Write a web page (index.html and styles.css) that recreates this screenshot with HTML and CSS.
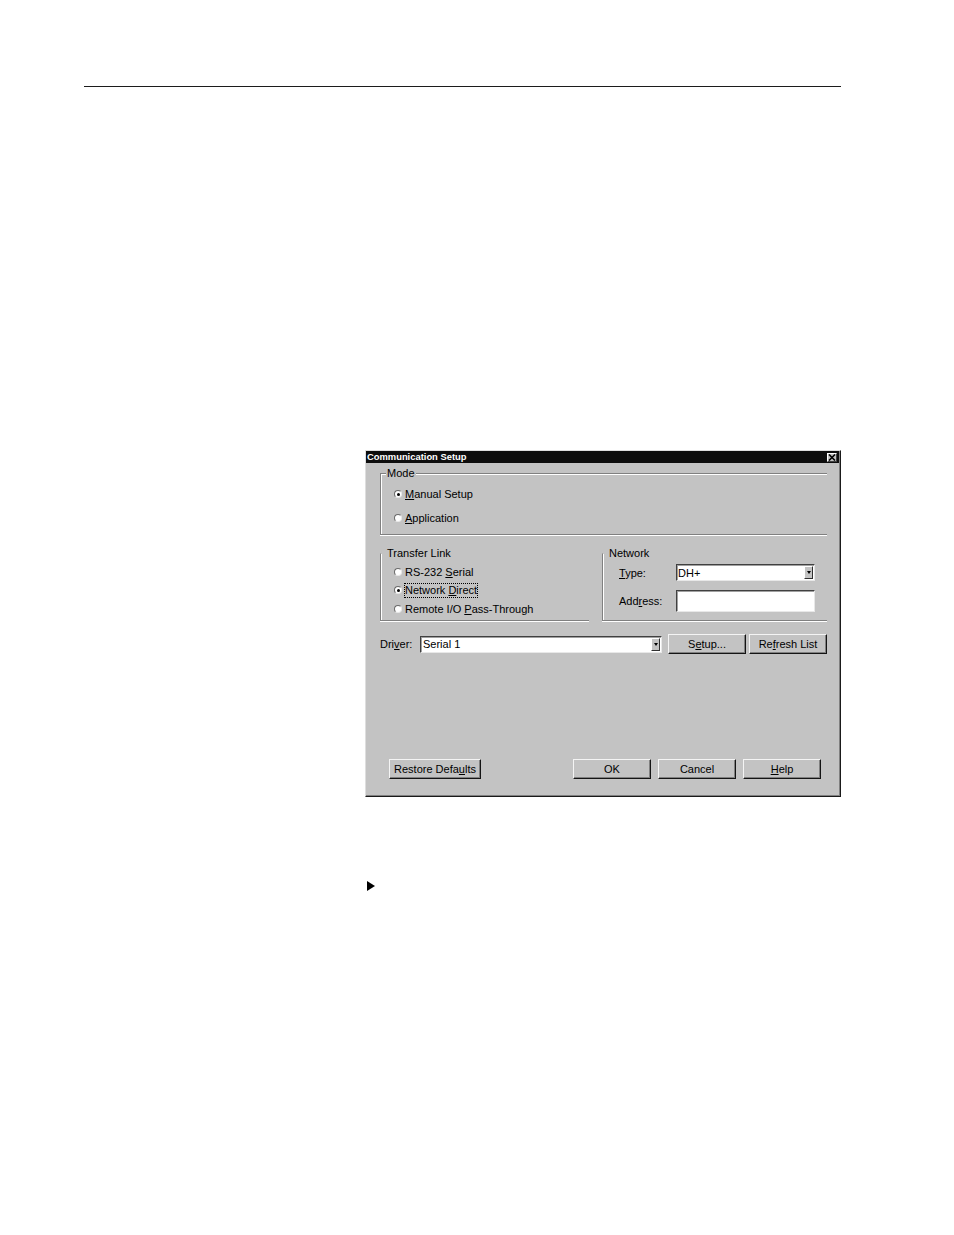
FILE: index.html
```html
<!DOCTYPE html>
<html>
<head>
<meta charset="utf-8">
<link rel="stylesheet" href="styles.css">
</head>
<body>
<div class="rule"></div>
<div class="dialog">
  <div class="titlebar">
    <span class="title">Communication Setup</span>
    <span class="close"><svg width="8" height="7" viewBox="0 0 8 7"><path d="M1 0.5 L7 6.5 M7 0.5 L1 6.5" stroke="#000" stroke-width="1.6" fill="none"/></svg></span>
  </div>
  <div class="body">
    <div class="group mode">
      <div class="legend">Mode</div>
      <div class="radio-row m1"><span class="radio on"></span><span><u>M</u>anual Setup</span></div>
      <div class="radio-row m2"><span class="radio"></span><span><u>A</u>pplication</span></div>
    </div>
    <div class="section">
      <div class="group transfer">
        <div class="legend">Transfer Link</div>
        <div class="radio-row t1"><span class="radio"></span><span>RS-232 <u>S</u>erial</span></div>
        <div class="radio-row t2"><span class="radio on"></span><span class="focus">Network <u>D</u>irect</span></div>
        <div class="radio-row t3"><span class="radio"></span><span>Remote I/O <u>P</u>ass-Through</span></div>
      </div>
      <div class="group network">
        <div class="legend">Network</div>
        <div class="field-row type-row">
          <span class="flabel"><u>T</u>ype:</span>
          <div class="combo type-combo"><span class="ctext">DH+</span><span class="dd"></span></div>
        </div>
        <div class="field-row addr-row">
          <span class="flabel">Add<u>r</u>ess:</span>
          <div class="textbox"></div>
        </div>
      </div>
    </div>
    <div class="driver-row">
      <span class="dlabel">Dri<u>v</u>er:</span>
      <div class="combo driver-combo"><span class="ctext">Serial 1</span><span class="dd"></span></div>
      <span class="btn setup">S<u>e</u>tup...</span>
      <span class="btn refresh">Re<u>f</u>resh List</span>
    </div>
    <div class="button-row">
      <span class="btn restore">Restore Defa<u>u</u>lts</span>
      <span class="btn ok">OK</span>
      <span class="btn cancel">Cancel</span>
      <span class="btn help"><u>H</u>elp</span>
    </div>
  </div>
</div>
<div class="bullet"></div>
</body>
</html>
```
FILE: styles.css
```css
body {
  margin: 0;
  background: #fff;
  font-family: "Liberation Sans", Arial, sans-serif;
  font-size: 11px;
  color: #000;
}
u {
  text-decoration: underline;
  text-decoration-thickness: 1px;
  text-underline-offset: 1px;
}
.rule {
  margin: 86px 0 0 84px;
  width: 757px;
  height: 1px;
  background: #1c1c1c;
}
.dialog {
  margin: 363px 0 0 365px;
  width: 476px;
  height: 347px;
  box-sizing: border-box;
  background: #c3c3c3;
  border: 1px solid;
  border-color: #dedede #1a1a1a #1a1a1a #dedede;
  box-shadow: inset -1px -1px 0 #808080;
  display: flex;
  flex-direction: column;
}
.titlebar {
  height: 12px;
  margin-right: 1px;
  background: #0d0d0d;
  display: flex;
  align-items: center;
  justify-content: space-between;
  padding: 0 2px 0 1px;
}
.title {
  color: #fff;
  font-weight: bold;
  font-size: 9.4px;
  line-height: 12px;
}
.close {
  width: 10px;
  height: 9px;
  box-sizing: border-box;
  background: #c3c3c3;
  border: 1px solid;
  border-color: #fff #404040 #404040 #fff;
  display: flex;
  align-items: center;
  justify-content: center;
}
.close svg { display: block; }
.body {
  flex: 1;
  padding: 10px 12px 0 14px;
  display: flex;
  flex-direction: column;
}
.group {
  box-sizing: border-box;
  border-left: 1px solid #808080;
  border-bottom: 1px solid #808080;
  border-top: 1px solid transparent;
  box-shadow: inset 1px 0 0 #fff, 0 1px 0 #fff;
}
.mode {
  width: 447px;
  height: 62px;
  border-top-color: #808080;
  box-shadow: inset 1px 1px 0 #fff, 0 1px 0 #fff;
}
.legend {
  margin: -7px 0 0 5px;
  padding: 0 1px;
  line-height: 13px;
  background: #c3c3c3;
  width: fit-content;
}
.radio-row {
  display: flex;
  align-items: center;
  height: 16px;
  padding-left: 13px;
  gap: 3px;
  line-height: 13px;
}
.m1 { margin-top: 6px; }
.m2 { margin-top: 8px; }
.t1 { margin-top: 4px; }
.t2 { margin-top: 2px; }
.t3 { margin-top: 3px; }
.radio {
  width: 8px;
  height: 8px;
  box-sizing: border-box;
  border-radius: 50%;
  background: #fff;
  border: 1px solid;
  border-color: #6a6a6a #e8e8e8 #e8e8e8 #6a6a6a;
  display: flex;
  align-items: center;
  justify-content: center;
  flex: none;
}
.radio.on::after {
  content: "";
  width: 3px;
  height: 3px;
  border-radius: 50%;
  background: #000;
}
.focus {
  outline: 1px dotted #000;
  outline-offset: 0;
}
.section {
  display: flex;
  margin-top: 18px;
  height: 68px;
}
.transfer {
  width: 209px;
  height: 68px;
}
.network {
  width: 225px;
  height: 68px;
  margin-left: 13px;
}
.field-row {
  display: flex;
  align-items: center;
  padding-left: 16px;
}
.type-row { height: 17px; margin-top: 4px; }
.addr-row { height: 22px; margin-top: 9px; }
.flabel { width: 57px; flex: none; }
.combo {
  display: flex;
  box-sizing: border-box;
  background: #fff;
  border: 1px solid;
  border-color: #404040 #e8e8e8 #e8e8e8 #404040;
  box-shadow: inset 1px 1px 0 #a0a0a0;
  align-items: stretch;
}
.ctext {
  flex: 1;
  padding-left: 1px;
  line-height: 14px;
  display: flex;
  align-items: center;
}
.type-combo { width: 139px; height: 17px; }
.driver-combo { width: 242px; height: 17px; }
.driver-combo .ctext { padding-left: 2px; }
.dd {
  width: 9px;
  margin: 1px 1px 1px 0;
  box-sizing: border-box;
  background: #c3c3c3;
  border: 1px solid;
  border-color: #fff #303030 #303030 #fff;
  display: flex;
  align-items: center;
  justify-content: center;
  flex: none;
}
.dd::after {
  content: "";
  border-top: 3px solid #000;
  border-left: 2px solid transparent;
  border-right: 2px solid transparent;
}
.textbox {
  width: 139px;
  height: 22px;
  box-sizing: border-box;
  background: #fff;
  border: 1px solid;
  border-color: #404040 #e8e8e8 #e8e8e8 #404040;
  box-shadow: inset 1px 1px 0 #a0a0a0;
}
.driver-row {
  display: flex;
  align-items: center;
  height: 20px;
  margin-top: 13px;
}
.dlabel {
  width: 40px;
  flex: none;
}
.btn {
  box-sizing: border-box;
  width: 78px;
  height: 20px;
  display: flex;
  align-items: center;
  justify-content: center;
  background: #c3c3c3;
  border: 1px solid;
  border-color: #f4f4f4 #141414 #141414 #f4f4f4;
  box-shadow: inset -1px -1px 0 #808080;
  flex: none;
}
.setup { margin-left: 6px; }
.refresh { margin-left: 3px; }
.button-row {
  display: flex;
  align-items: center;
  height: 21px;
  margin-top: 104px;
}
.button-row .btn { height: 20px; }
.restore { width: 92px; margin-left: 9px; }
.ok { margin-left: auto; }
.cancel { margin-left: 7px; }
.help { margin-left: 7px; margin-right: 7px; }
.bullet {
  margin: 84px 0 0 367px;
  width: 0;
  height: 0;
  border-left: 8px solid #000;
  border-top: 5px solid transparent;
  border-bottom: 5px solid transparent;
}
```
